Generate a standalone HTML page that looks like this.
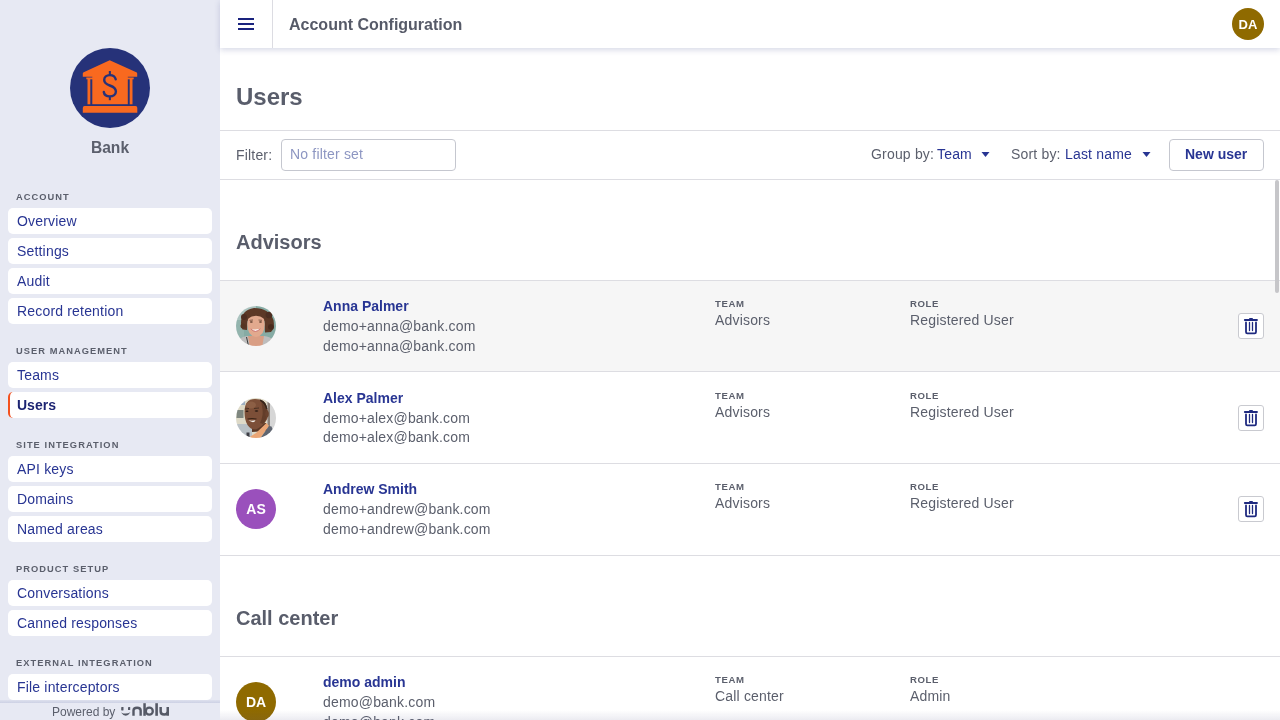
<!DOCTYPE html>
<html><head><meta charset="utf-8">
<style>
*{box-sizing:border-box;margin:0;padding:0}
html,body{width:1280px;height:720px;overflow:hidden;background:#fff;font-family:"Liberation Sans",sans-serif;}
.t{position:absolute;white-space:nowrap;line-height:1}
.b{position:absolute}
</style></head><body><div style="position:absolute;left:0;top:0;width:1280px;height:720px;overflow:hidden;will-change:transform">
<div class="b" style="left:0;top:0;width:220px;height:720px;background:#e7e9f3"></div>
<svg class="b" style="left:70px;top:48px" width="80" height="80" viewBox="0 0 80 80">
<circle cx="40" cy="40" r="40" fill="#263279"/>
<g fill="#f9691f">
<path d="M12.8 28.8 V25.6 Q12.8 24.6 13.7 24.2 L39.7 12.2 L66.3 24.2 Q67.2 24.6 67.2 25.6 V28.8 Z"/>
<rect x="22.3" y="28" width="35.5" height="28.2"/>
<rect x="16.3" y="29.5" width="7" height="1.8"/>
<rect x="56.8" y="29.5" width="6.9" height="1.8"/>
<rect x="17.5" y="30.5" width="2.8" height="25.8"/>
<rect x="59.7" y="30.5" width="2.8" height="25.8"/>
<path d="M14.5 58 H65.5 Q67.3 58 67.3 60 V64.7 H12.8 V60 Q12.8 58 14.5 58 Z"/>
</g>
<rect x="38.8" y="23" width="2.1" height="4.5" fill="#263279"/>
<rect x="38.8" y="48" width="2.1" height="4.2" fill="#263279"/>
<path d="M45.7 31.3 C45.1 28.7 42.8 27.1 39.8 27.1 C36.6 27.1 34.2 29.1 34.2 32 C34.2 35.3 37 36.5 39.8 37.5 C42.8 38.5 45.9 40 45.9 43.5 C45.9 46.5 43.3 48.4 39.8 48.4 C36.7 48.4 34.2 46.6 33.8 44" stroke="#263279" stroke-width="2.4" fill="none" stroke-linecap="round"/>
</svg>
<div class="t" style="left:0px;width:220px;text-align:center;top:139.59px;font-size:15.6px;color:#5b5f6c;font-weight:bold;">Bank</div>
<div class="t" style="left:16px;top:192.93px;font-size:9.3px;color:#5b5f6c;font-weight:bold;letter-spacing:1.05px;">ACCOUNT</div>
<div class="b" style="left:8px;top:208px;width:204px;height:26px;background:#fff;border-radius:5px"></div>
<div class="t" style="left:17px;top:213.65px;font-size:14px;color:#283593;letter-spacing:0.18px;">Overview</div>
<div class="b" style="left:8px;top:238px;width:204px;height:26px;background:#fff;border-radius:5px"></div>
<div class="t" style="left:17px;top:243.65px;font-size:14px;color:#283593;letter-spacing:0.18px;">Settings</div>
<div class="b" style="left:8px;top:268px;width:204px;height:26px;background:#fff;border-radius:5px"></div>
<div class="t" style="left:17px;top:273.65px;font-size:14px;color:#283593;letter-spacing:0.18px;">Audit</div>
<div class="b" style="left:8px;top:298px;width:204px;height:26px;background:#fff;border-radius:5px"></div>
<div class="t" style="left:17px;top:303.65px;font-size:14px;color:#283593;letter-spacing:0.18px;">Record retention</div>
<div class="t" style="left:16px;top:346.93px;font-size:9.3px;color:#5b5f6c;font-weight:bold;letter-spacing:1.05px;">USER MANAGEMENT</div>
<div class="b" style="left:8px;top:362px;width:204px;height:26px;background:#fff;border-radius:5px"></div>
<div class="t" style="left:17px;top:367.65px;font-size:14px;color:#283593;letter-spacing:0.18px;">Teams</div>
<div class="b" style="left:8px;top:392px;width:204px;height:26px;background:#fff;border-radius:5px;border-left:2.5px solid #f4511e"></div>
<div class="t" style="left:17px;top:397.65px;font-size:14px;color:#1c2472;font-weight:bold;">Users</div>
<div class="t" style="left:16px;top:440.93px;font-size:9.3px;color:#5b5f6c;font-weight:bold;letter-spacing:1.05px;">SITE INTEGRATION</div>
<div class="b" style="left:8px;top:456px;width:204px;height:26px;background:#fff;border-radius:5px"></div>
<div class="t" style="left:17px;top:461.65px;font-size:14px;color:#283593;letter-spacing:0.18px;">API keys</div>
<div class="b" style="left:8px;top:486px;width:204px;height:26px;background:#fff;border-radius:5px"></div>
<div class="t" style="left:17px;top:491.65px;font-size:14px;color:#283593;letter-spacing:0.18px;">Domains</div>
<div class="b" style="left:8px;top:516px;width:204px;height:26px;background:#fff;border-radius:5px"></div>
<div class="t" style="left:17px;top:521.65px;font-size:14px;color:#283593;letter-spacing:0.18px;">Named areas</div>
<div class="t" style="left:16px;top:564.93px;font-size:9.3px;color:#5b5f6c;font-weight:bold;letter-spacing:1.05px;">PRODUCT SETUP</div>
<div class="b" style="left:8px;top:580px;width:204px;height:26px;background:#fff;border-radius:5px"></div>
<div class="t" style="left:17px;top:585.65px;font-size:14px;color:#283593;letter-spacing:0.18px;">Conversations</div>
<div class="b" style="left:8px;top:610px;width:204px;height:26px;background:#fff;border-radius:5px"></div>
<div class="t" style="left:17px;top:615.65px;font-size:14px;color:#283593;letter-spacing:0.18px;">Canned responses</div>
<div class="t" style="left:16px;top:658.93px;font-size:9.3px;color:#5b5f6c;font-weight:bold;letter-spacing:1.05px;">EXTERNAL INTEGRATION</div>
<div class="b" style="left:8px;top:674px;width:204px;height:26px;background:#fff;border-radius:5px"></div>
<div class="t" style="left:17px;top:679.65px;font-size:14px;color:#283593;letter-spacing:0.18px;">File interceptors</div>
<div class="b" style="left:0;top:700px;width:220px;height:3px;background:linear-gradient(to bottom,rgba(205,209,228,.35),rgba(205,209,228,1))"></div>
<div class="t" style="left:52px;top:705.84px;font-size:12px;color:#5b5f6c;">Powered by</div>
<svg class="b" style="left:118px;top:700px" width="56" height="20" viewBox="0 0 56 20">
<g fill="#555966">
<rect x="3.2" y="7" width="2.3" height="3.5" rx="0.4"/>
<rect x="10" y="7" width="2.2" height="3.1" rx="0.4"/>
<path d="M3.1 12.4 Q7.8 19.3 12.5 12.2 Q7.8 14.9 3.1 12.4 Z"/>
</g>
<g stroke="#555966" fill="none">
<path d="M15.5 15.8 V10.6 Q15.5 7.7 19.1 7.7 Q22.65 7.7 22.65 10.6 V15.8" stroke-width="2.4"/>
<path d="M26.55 3.2 V15.8" stroke-width="2.5"/>
<circle cx="31.3" cy="11.15" r="3.5" stroke-width="2.3"/>
<path d="M38.6 3.2 V15.8" stroke-width="2.6"/>
<path d="M42.65 7 V11.3 Q42.65 14.6 46.2 14.6 Q49.75 14.6 49.75 11.3 V7 M49.75 10 V15.8" stroke-width="2.5"/>
</g>
</svg>
<div class="t" style="left:236px;top:84.68px;font-size:24px;color:#595d6b;font-weight:bold;">Users</div>
<div class="b" style="left:220px;top:130px;width:1060px;height:1px;background:#dddde2"></div>
<div class="t" style="left:236px;top:148.15px;font-size:14px;color:#5b5f6c;letter-spacing:0.18px;">Filter:</div>
<div class="b" style="left:281px;top:139px;width:175px;height:32px;border:1px solid #c5c7cf;border-radius:4px;background:#fff"></div>
<div class="t" style="left:290px;top:147.15px;font-size:14px;color:#8d96c2;letter-spacing:0.18px;">No filter set</div>
<div class="t" style="left:871px;top:147.15px;font-size:14px;color:#5b5f6c;letter-spacing:0.18px;">Group by:</div>
<div class="t" style="left:937px;top:147.15px;font-size:14px;color:#283593;letter-spacing:0.18px;">Team</div>
<svg class="b" style="left:981px;top:151px" width="9" height="7" viewBox="0 0 9 7"><path d="M0.5 1 H8.5 L4.5 6 Z" fill="#283593"/></svg>
<div class="t" style="left:1011px;top:147.15px;font-size:14px;color:#5b5f6c;letter-spacing:0.18px;">Sort by:</div>
<div class="t" style="left:1065px;top:147.15px;font-size:14px;color:#283593;letter-spacing:0.18px;">Last name</div>
<svg class="b" style="left:1142px;top:151px" width="9" height="7" viewBox="0 0 9 7"><path d="M0.5 1 H8.5 L4.5 6 Z" fill="#283593"/></svg>
<div class="b" style="left:1169px;top:139px;width:95px;height:32px;border:1px solid #c5c7cf;border-radius:4px;background:#fff"></div>
<div class="t" style="left:1185px;top:147.15px;font-size:14px;color:#283593;font-weight:bold;">New user</div>
<div class="b" style="left:220px;top:179px;width:1060px;height:1px;background:#dddde2"></div>
<div class="t" style="left:236px;top:232.07px;font-size:20px;color:#595d6b;font-weight:bold;">Advisors</div>
<div class="b" style="left:220px;top:280px;width:1060px;height:1px;background:#dddde2"></div>
<div class="b" style="left:220px;top:371px;width:1060px;height:1px;background:#dddde2"></div>
<div class="b" style="left:220px;top:463px;width:1060px;height:1px;background:#dddde2"></div>
<div class="b" style="left:220px;top:555px;width:1060px;height:1px;background:#dddde2"></div>
<div class="b" style="left:220px;top:656px;width:1060px;height:1px;background:#dddde2"></div>
<div class="b" style="left:220px;top:281px;width:1060px;height:90px;background:#f6f6f6"></div>
<svg class="b" style="left:236px;top:306px" width="40" height="40" viewBox="0 0 40 40">
<defs><clipPath id="ca"><circle cx="20" cy="20" r="20"/></clipPath><filter id="fa" x="-20%" y="-20%" width="140%" height="140%"><feGaussianBlur stdDeviation="0.6"/></filter></defs>
<g clip-path="url(#ca)"><g filter="url(#fa)">
<rect x="-2" y="-2" width="44" height="44" fill="#86aba4"/>
<rect x="-2" y="-2" width="22" height="16" fill="#abc3bf"/>
<rect x="-2" y="14" width="10" height="18" fill="#93b4ad"/>
<path d="M1 42 L3 34 Q6 30.5 11 30 L28 30 Q34 30.5 37 34 L40 42 Z" fill="#bdbdbd"/>
<path d="M12 30 L14 42 L26 42 L28 30 Z" fill="#d99e84"/>
<path d="M10.5 31 L12.5 40" stroke="#3a3a3a" stroke-width="1"/>
<path d="M5 17 Q5 4 18 2 Q33 2 37.5 14 Q39 22 35 26 L29 26.5 L28.5 15 Q20 9 11.5 15 L11 24 L6.5 23.5 Q5 21 5 17 Z" fill="#5b3826"/>
<circle cx="8" cy="11" r="3" fill="#4e2f20"/><circle cx="33" cy="9" r="3.3" fill="#4e2f20"/><circle cx="35" cy="21" r="3" fill="#4a2c1e"/><circle cx="7" cy="20" r="2.5" fill="#553422"/>
<path d="M11.3 18 Q11.3 7.5 20 7.5 Q28.7 7.5 28.7 18 Q28.7 30 20 31 Q11.3 30 11.3 18 Z" fill="#e2a98e"/>
<path d="M11.5 13 Q20 6.5 28.5 13 L28.5 9 Q20 4 11.5 9 Z" fill="#5b3826"/>
<path d="M13.5 14.3 L17 14 M22.5 14 L26 14.3" stroke="#6a4a3a" stroke-width="0.8"/>
<ellipse cx="15.3" cy="16" rx="1.5" ry="0.8" fill="#5a3a2a"/>
<ellipse cx="24.5" cy="16" rx="1.5" ry="0.8" fill="#5a3a2a"/>
<path d="M15.2 23 Q19.8 24.2 24 22.8 Q20.5 27.5 15.2 23 Z" fill="#fff"/>
<path d="M14.8 22.8 Q19.5 28 24.3 22.6" stroke="#c86a6a" stroke-width="0.9" fill="none"/>
</g></g></svg>
<div class="t" style="left:323px;top:299.15px;font-size:14px;color:#283593;font-weight:bold;">Anna Palmer</div>
<div class="t" style="left:323px;top:319.15px;font-size:14px;color:#5b5f6c;letter-spacing:0.18px;">demo+anna@bank.com</div>
<div class="t" style="left:323px;top:338.65px;font-size:14px;color:#5b5f6c;letter-spacing:0.18px;">demo+anna@bank.com</div>
<div class="t" style="left:715px;top:298.87px;font-size:9.6px;color:#5b5f6c;font-weight:bold;letter-spacing:0.6px;">TEAM</div>
<div class="t" style="left:715px;top:313.15px;font-size:14px;color:#5b5f6c;letter-spacing:0.18px;">Advisors</div>
<div class="t" style="left:910px;top:298.87px;font-size:9.6px;color:#5b5f6c;font-weight:bold;letter-spacing:0.6px;">ROLE</div>
<div class="t" style="left:910px;top:313.15px;font-size:14px;color:#5b5f6c;letter-spacing:0.18px;">Registered User</div>
<div class="b" style="left:1238px;top:313px;width:26px;height:26px;border:1px solid #c9cad0;border-radius:3px;background:#fff"></div>
<svg class="b" style="left:1238px;top:313px" width="26" height="26" viewBox="0 0 26 26">
<path d="M6.8 7 H19" stroke="#1f2a80" stroke-width="1.8" stroke-linecap="round"/>
<path d="M11.9 6 H14.1" stroke="#1f2a80" stroke-width="1.8" stroke-linecap="round"/>
<path d="M8 9.5 V19 Q8 20.3 9.3 20.3 H16.7 Q18 20.3 18 19 V9.5" stroke="#1f2a80" stroke-width="1.8" fill="none" stroke-linecap="round"/>
<path d="M11.5 9.5 V17.5 M14.5 9.5 V17.5" stroke="#1f2a80" stroke-width="1.3" stroke-linecap="round"/>
</svg>
<svg class="b" style="left:236px;top:398px" width="40" height="40" viewBox="0 0 40 40">
<defs><clipPath id="cb"><circle cx="20" cy="20" r="20"/></clipPath><filter id="fb" x="-20%" y="-20%" width="140%" height="140%"><feGaussianBlur stdDeviation="0.6"/></filter></defs>
<g clip-path="url(#cb)"><g filter="url(#fb)">
<rect x="-2" y="-2" width="44" height="44" fill="#dedac8"/>
<rect x="2" y="1" width="7" height="6" fill="#9fb0c2"/>
<rect x="0.5" y="12" width="7" height="8" fill="#7f8780"/>
<rect x="-2" y="26" width="18" height="16" fill="#b9c1c6"/>
<rect x="31" y="-2" width="11" height="44" fill="#d6d6d6"/>
<rect x="31.5" y="4" width="2.5" height="28" fill="#8a8078"/>
<path d="M16 26 L30 25 L31 33 L16 34 Z" fill="#5a3828"/>
<path d="M8.5 14 Q8.5 1 19 1 Q30 1 31 10 L32 14 Q32.5 20 30 23 Q27 28 20 31.5 Q15 32 11.5 27 Q8.5 22 8.5 14 Z" fill="#7c4f37"/>
<path d="M25 2 Q30.5 4 31 11 L32 14 Q31 22 27 26 L24 25 Q28 18 26 8 Z" fill="#633e2b"/>
<path d="M24 1.5 Q30 3 31.5 11 L30 11 Q28.5 5 24 3 Z" fill="#36251a"/>
<ellipse cx="15" cy="7" rx="5" ry="3.5" fill="#8c5e45"/>
<ellipse cx="31" cy="16" rx="1.8" ry="3.2" fill="#6a432e"/>
<path d="M9 11 L13 10.5 M18 10.5 L23 10" stroke="#3e2a1e" stroke-width="0.8"/>
<ellipse cx="11" cy="13.3" rx="1.5" ry="0.7" fill="#2a1a12"/>
<ellipse cx="20.5" cy="13" rx="1.8" ry="0.7" fill="#2a1a12"/>
<path d="M11.5 21 Q16 20 20.5 21" stroke="#3a2418" stroke-width="1.1" fill="none"/>
<path d="M12.5 22.3 Q16 23 19.5 22.2 Q18 26 12.5 22.3 Z" fill="#f3efe8"/>
<path d="M12 40 L20 35 L30.5 25 L33 28 L24.5 40 Z" fill="#eaa676"/>
<path d="M24.5 40 L33 28 L35.5 28.5 L38.5 36 L35 40 Z" fill="#5f6570"/>
<rect x="10.5" y="34.5" width="3" height="6" fill="#3c3c44"/>
</g></g></svg>
<div class="t" style="left:323px;top:390.82px;font-size:14px;color:#283593;font-weight:bold;">Alex Palmer</div>
<div class="t" style="left:323px;top:410.82px;font-size:14px;color:#5b5f6c;letter-spacing:0.18px;">demo+alex@bank.com</div>
<div class="t" style="left:323px;top:430.32px;font-size:14px;color:#5b5f6c;letter-spacing:0.18px;">demo+alex@bank.com</div>
<div class="t" style="left:715px;top:390.54px;font-size:9.6px;color:#5b5f6c;font-weight:bold;letter-spacing:0.6px;">TEAM</div>
<div class="t" style="left:715px;top:404.82px;font-size:14px;color:#5b5f6c;letter-spacing:0.18px;">Advisors</div>
<div class="t" style="left:910px;top:390.54px;font-size:9.6px;color:#5b5f6c;font-weight:bold;letter-spacing:0.6px;">ROLE</div>
<div class="t" style="left:910px;top:404.82px;font-size:14px;color:#5b5f6c;letter-spacing:0.18px;">Registered User</div>
<div class="b" style="left:1238px;top:405px;width:26px;height:26px;border:1px solid #c9cad0;border-radius:3px;background:#fff"></div>
<svg class="b" style="left:1238px;top:405px" width="26" height="26" viewBox="0 0 26 26">
<path d="M6.8 7 H19" stroke="#1f2a80" stroke-width="1.8" stroke-linecap="round"/>
<path d="M11.9 6 H14.1" stroke="#1f2a80" stroke-width="1.8" stroke-linecap="round"/>
<path d="M8 9.5 V19 Q8 20.3 9.3 20.3 H16.7 Q18 20.3 18 19 V9.5" stroke="#1f2a80" stroke-width="1.8" fill="none" stroke-linecap="round"/>
<path d="M11.5 9.5 V17.5 M14.5 9.5 V17.5" stroke="#1f2a80" stroke-width="1.3" stroke-linecap="round"/>
</svg>
<div class="b" style="left:236px;top:489px;width:40px;height:40px;border-radius:50%;background:#9a50bc"></div>
<div class="t" style="left:236px;width:40px;text-align:center;top:502.15px;font-size:14px;color:#fff;font-weight:bold;">AS</div>
<div class="t" style="left:323px;top:482.48px;font-size:14px;color:#283593;font-weight:bold;">Andrew Smith</div>
<div class="t" style="left:323px;top:502.48px;font-size:14px;color:#5b5f6c;letter-spacing:0.18px;">demo+andrew@bank.com</div>
<div class="t" style="left:323px;top:521.98px;font-size:14px;color:#5b5f6c;letter-spacing:0.18px;">demo+andrew@bank.com</div>
<div class="t" style="left:715px;top:482.20px;font-size:9.6px;color:#5b5f6c;font-weight:bold;letter-spacing:0.6px;">TEAM</div>
<div class="t" style="left:715px;top:496.48px;font-size:14px;color:#5b5f6c;letter-spacing:0.18px;">Advisors</div>
<div class="t" style="left:910px;top:482.20px;font-size:9.6px;color:#5b5f6c;font-weight:bold;letter-spacing:0.6px;">ROLE</div>
<div class="t" style="left:910px;top:496.48px;font-size:14px;color:#5b5f6c;letter-spacing:0.18px;">Registered User</div>
<div class="b" style="left:1238px;top:496px;width:26px;height:26px;border:1px solid #c9cad0;border-radius:3px;background:#fff"></div>
<svg class="b" style="left:1238px;top:496px" width="26" height="26" viewBox="0 0 26 26">
<path d="M6.8 7 H19" stroke="#1f2a80" stroke-width="1.8" stroke-linecap="round"/>
<path d="M11.9 6 H14.1" stroke="#1f2a80" stroke-width="1.8" stroke-linecap="round"/>
<path d="M8 9.5 V19 Q8 20.3 9.3 20.3 H16.7 Q18 20.3 18 19 V9.5" stroke="#1f2a80" stroke-width="1.8" fill="none" stroke-linecap="round"/>
<path d="M11.5 9.5 V17.5 M14.5 9.5 V17.5" stroke="#1f2a80" stroke-width="1.3" stroke-linecap="round"/>
</svg>
<div class="t" style="left:236px;top:608.07px;font-size:20px;color:#595d6b;font-weight:bold;">Call center</div>
<div class="b" style="left:236px;top:682px;width:40px;height:40px;border-radius:50%;background:#8f6a00"></div>
<div class="t" style="left:236px;width:40px;text-align:center;top:695.15px;font-size:14px;color:#fff;font-weight:bold;">DA</div>
<div class="t" style="left:323px;top:675.15px;font-size:14px;color:#283593;font-weight:bold;">demo admin</div>
<div class="t" style="left:323px;top:695.15px;font-size:14px;color:#5b5f6c;letter-spacing:0.18px;">demo@bank.com</div>
<div class="t" style="left:323px;top:714.65px;font-size:14px;color:#5b5f6c;letter-spacing:0.18px;">demo@bank.com</div>
<div class="t" style="left:715px;top:674.87px;font-size:9.6px;color:#5b5f6c;font-weight:bold;letter-spacing:0.6px;">TEAM</div>
<div class="t" style="left:715px;top:689.15px;font-size:14px;color:#5b5f6c;letter-spacing:0.18px;">Call center</div>
<div class="t" style="left:910px;top:674.87px;font-size:9.6px;color:#5b5f6c;font-weight:bold;letter-spacing:0.6px;">ROLE</div>
<div class="t" style="left:910px;top:689.15px;font-size:14px;color:#5b5f6c;letter-spacing:0.18px;">Admin</div>
<div class="b" style="left:1275px;top:180px;width:3.5px;height:113px;background:#c6c6c9;border-radius:2px"></div>
<div class="b" style="left:220px;top:710px;width:1060px;height:10px;background:linear-gradient(to bottom,rgba(80,80,130,0),rgba(80,80,130,.11))"></div>
<div class="b" style="left:220px;top:0;width:1060px;height:48px;background:#fff;box-shadow:0 2px 6px rgba(50,60,130,.2)"></div>
<div class="b" style="left:272px;top:0;width:1px;height:48px;background:#dcdce2"></div>
<svg class="b" style="left:238px;top:18px" width="16" height="12" viewBox="0 0 16 12"><path d="M0 1 H16 M0 6 H16 M0 11 H16" stroke="#1a237e" stroke-width="2"/></svg>
<div class="t" style="left:289px;top:17.46px;font-size:16px;color:#565a68;font-weight:bold;">Account Configuration</div>
<div class="b" style="left:1232px;top:8px;width:32px;height:32px;border-radius:50%;background:#8f6a00"></div>
<div class="t" style="left:1232px;width:32px;text-align:center;top:17.80px;font-size:13px;color:#fff;font-weight:bold;">DA</div>
</div></body></html>
